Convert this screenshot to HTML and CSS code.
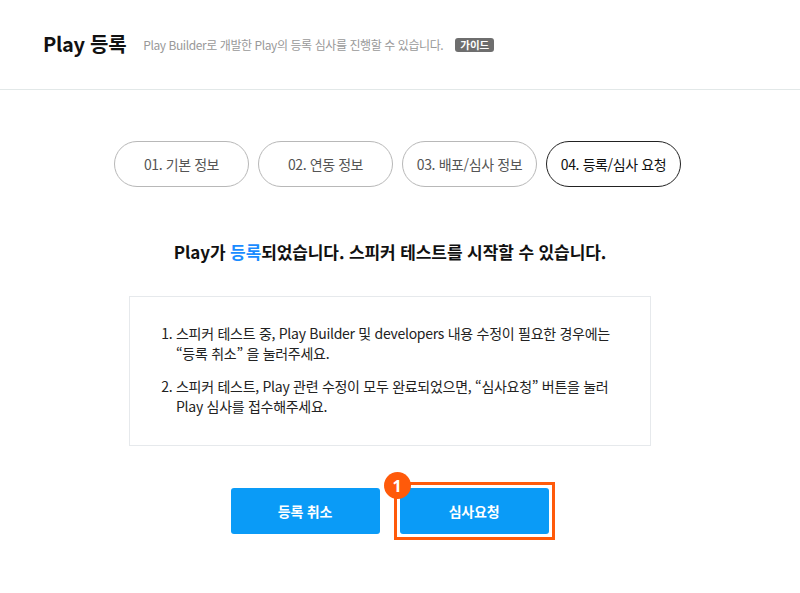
FILE: index.html
```html
<!DOCTYPE html>
<html lang="ko">
<head>
<meta charset="utf-8">
<link rel="stylesheet" href="styles.css">
</head>
<body>
<header class="header">
  <h1 class="title">Play 등록</h1>
  <p class="subtitle">Play Builder로 개발한 Play의 등록 심사를 진행할 수 있습니다.</p>
  <span class="guide">가이드</span>
</header>
<main class="main">
  <nav class="steps">
    <div class="step">01. 기본 정보</div>
    <div class="step">02. 연동 정보</div>
    <div class="step">03. 배포/심사 정보</div>
    <div class="step active">04. 등록/심사 요청</div>
  </nav>
  <h2 class="headline">Play가 <span class="accent">등록</span>되었습니다. 스피커 테스트를 시작할 수 있습니다.</h2>
  <div class="notice">
    <ol class="notice-list">
      <li>스피커 테스트 중, Play Builder 및 developers 내용 수정이 필요한 경우에는<br>“등록 취소” 을 눌러주세요.</li>
      <li>스피커 테스트, Play 관련 수정이 모두 완료되었으면, “심사요청” 버튼을 눌러<br>Play 심사를 접수해주세요.</li>
    </ol>
  </div>
  <div class="actions">
    <button class="btn">등록 취소</button>
    <div class="highlight">
      <button class="btn">심사요청</button>
      <span class="marker">1</span>
    </div>
  </div>
</main>
</body>
</html>
```
FILE: styles.css
```css
* { box-sizing: border-box; }
html, body { margin: 0; padding: 0; background: #fff; }
body {
  font-family: "Noto Sans CJK KR", "Noto Sans", sans-serif;
  color: #222;
  width: 800px;
  height: 593px;
  overflow: hidden;
}
.header {
  height: 90px;
  border-bottom: 1px solid #e2e8e8;
  display: flex;
  align-items: center;
  padding: 0 0 0 43px;
}
.title {
  margin: 0;
  font-size: 20px;
  font-weight: 700;
  color: #111;
  letter-spacing: -0.3px;
  line-height: 1;
  position: relative;
  top: -1px;
}
.subtitle {
  margin: 0 0 0 17px;
  font-size: 12px;
  color: #999;
  letter-spacing: -0.42px;
}
.guide {
  margin-left: 12px;
  background: #6e6e6e;
  color: #fff;
  font-size: 10.5px;
  font-weight: 700;
  border-radius: 3px;
  padding: 0 5px;
  line-height: 14px;
  height: 14px;
}
.main {
  display: flex;
  flex-direction: column;
  align-items: center;
  padding-right: 20px;
}
.steps {
  display: flex;
  gap: 9px;
  margin-top: 51px;
  margin-left: 15px;
}
.step {
  width: 135px;
  height: 46px;
  border: 1px solid #b8b8b8;
  border-radius: 23px;
  display: flex;
  align-items: center;
  justify-content: center;
  font-size: 14px;
  color: #555;
  letter-spacing: -0.4px;
}
.step.active {
  border: 1.5px solid #222;
  color: #111;
}
.headline {
  margin: 43px 0 0;
  font-size: 17px;
  font-weight: 700;
  color: #111;
  letter-spacing: -0.1px;
  line-height: 44px;
}
.accent { color: #1a8cff; }
.notice {
  margin-top: 22px;
  width: 522px;
  height: 150px;
  border: 1px solid #e6e9ec;
  padding: 26px 0 0 32px;
}
.notice-list {
  margin: 0;
  padding: 0 0 0 14px;
  font-size: 14px;
  line-height: 20px;
  color: #222;
  letter-spacing: -0.28px;
}
.notice-list li { margin-bottom: 13px; }
.actions {
  display: flex;
  align-items: center;
  gap: 14px;
  margin-top: 36px;
  margin-left: 5px;
}
.btn {
  width: 149px;
  height: 46px;
  border: none;
  border-radius: 3px;
  background: #0a9bf7;
  color: #fff;
  font-family: inherit;
  font-size: 14px;
  font-weight: 700;
  letter-spacing: -0.2px;
}
.highlight {
  position: relative;
  border: 3px solid #ff5a0a;
  padding: 3px;
  display: flex;
}
.marker {
  position: absolute;
  left: -13px;
  top: -13px;
  width: 27px;
  height: 27px;
  border-radius: 50%;
  background: #ff5a0a;
  color: #fff;
  font-family: "Noto Sans", sans-serif;
  font-weight: 700;
  font-size: 16px;
  display: flex;
  align-items: center;
  justify-content: center;
  line-height: 1;
}
```
